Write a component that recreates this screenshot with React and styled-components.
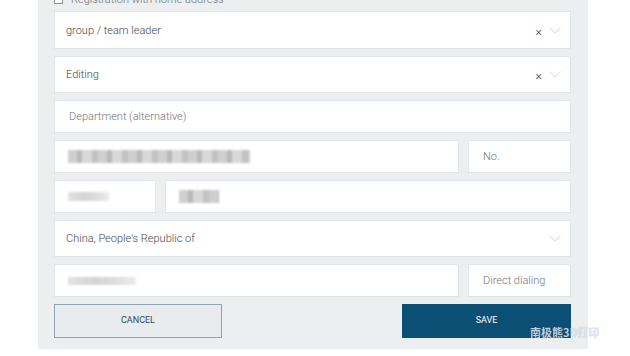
import styled, { createGlobalStyle } from "styled-components";

const GlobalStyle = createGlobalStyle`
  html, body {
    margin: 0;
    background: #ffffff;
    font-family: Roboto, "Liberation Sans", sans-serif;
    overflow: hidden;
  }
`;

export default function App() {
  return (
    <>
      <GlobalStyle />
      <Page>
        <Panel>
          <CheckRow>
            <Box />
            <CheckLabel>Registration with home address</CheckLabel>
          </CheckRow>

          <Field h={38}>
            <Value>group / team leader</Value>
            <Clear>×</Clear>
            <Chevron />
          </Field>

          <Field h={37}>
            <Value>Editing</Value>
            <Clear>×</Clear>
            <Chevron />
          </Field>

          <Field h={33}>
            <Placeholder indent={14}>Department (alternative)</Placeholder>
          </Field>

          <Row>
            <Field h={33} grow>
              <Blur w={182} h={13} />
            </Field>
            <Field h={33} w={103}>
              <Placeholder indent={14}>No.</Placeholder>
            </Field>
          </Row>

          <Row>
            <Field h={33} w={102}>
              <Blur w={41} h={9} light />
            </Field>
            <Field h={33} grow>
              <Blur w={40} h={13} />
            </Field>
          </Row>

          <Field h={37}>
            <Value>China, People's Republic of</Value>
            <Chevron />
          </Field>

          <Row>
            <Field h={33} grow>
              <Blur w={68} h={8} light />
            </Field>
            <Field h={33} w={103}>
              <Placeholder indent={14}>Direct dialing</Placeholder>
            </Field>
          </Row>

          <Buttons>
            <Button>CANCEL</Button>
            <Button primary>SAVE</Button>
          </Buttons>

          <Watermark>南极熊3D打印</Watermark>
        </Panel>
      </Page>
    </>
  );
}

function Chevron() {
  return (
    <ChevronSvg width="12" height="7" viewBox="0 0 12 7">
      <path d="M0.5 0.6 L6 6 L11.5 0.6" fill="none" stroke="#d5d9dd" strokeWidth="1" />
    </ChevronSvg>
  );
}

const Page = styled.div`
  width: 630px;
  height: 356px;
`;

const Panel = styled.div`
  position: relative;
  margin: -7px 0 0 38px;
  width: 550px;
  box-sizing: border-box;
  padding: 0 17px 17px 16px;
  background: #eceef0;
  display: flex;
  flex-direction: column;
  gap: 7px;
`;

const CheckRow = styled.div`
  height: 12px;
  display: flex;
  align-items: center;
  gap: 8px;
  margin-bottom: -1px;
`;

const Box = styled.div`
  width: 7px;
  height: 7px;
  border: 1px solid #8d9399;
  background: #fff;
`;

const CheckLabel = styled.span`
  font-size: 11px;
  font-weight: 300;
  color: #6b7075;
`;

const Row = styled.div`
  display: flex;
  gap: 9px;
`;

const Field = styled.div`
  height: ${(p) => p.h}px;
  ${(p) => (p.grow ? "flex: 1;" : "")}
  ${(p) => (p.w ? `width: ${p.w}px; flex: none;` : "")}
  box-sizing: border-box;
  background: #ffffff;
  border: 1px solid #e3e6e9;
  display: flex;
  align-items: center;
  padding: 0 9px 0 11px;
`;

const Value = styled.span`
  flex: 1;
  font-size: 11px;
  font-weight: 300;
  color: #3f4448;
`;

const Placeholder = styled.span`
  flex: 1;
  font-size: 11px;
  font-weight: 300;
  color: #6f757a;
  padding-left: ${(p) => p.indent - 11}px;
`;

const Clear = styled.span`
  font-size: 13px;
  font-weight: 300;
  color: #3f4448;
  margin-right: 7px;
  line-height: 1;
  position: relative;
  top: 1px;
`;

const ChevronSvg = styled.svg`
  flex: none;
  margin-left: auto;
`;

const Blur = styled.div`
  width: ${(p) => p.w}px;
  height: ${(p) => p.h}px;
  margin-left: 2px;
  background: ${(p) =>
    p.light
      ? "linear-gradient(90deg, #e2e2e2, #d4d4d4 40%, #dedede 70%, #ececec)"
      : "repeating-linear-gradient(90deg, #cfcfcf 0 9px, #b9b9b9 9px 14px, #d8d8d8 14px 24px, #c2c2c2 24px 30px)"};
  filter: blur(1.2px);
`;

const Buttons = styled.div`
  display: flex;
  justify-content: space-between;
`;

const Button = styled.button`
  width: ${(p) => (p.primary ? 169 : 168)}px;
  height: 34px;
  box-sizing: border-box;
  border: 1px solid ${(p) => (p.primary ? "#0b4f75" : "#8ea4b2")};
  background: ${(p) => (p.primary ? "#0b4f75" : "#e9ecee")};
  color: ${(p) => (p.primary ? "#ffffff" : "#2f4a5c")};
  font-family: Roboto, "Liberation Sans", sans-serif;
  font-size: 9px;
  padding: 0 0 2px;
`;

const Watermark = styled.div`
  position: absolute;
  left: 492px;
  top: 331px;
  font-family: "Noto Sans CJK SC", sans-serif;
  font-weight: 700;
  font-size: 11px;
  color: rgba(225, 235, 245, 0.85);
  white-space: nowrap;
  text-shadow: 0 0 1px rgba(0, 0, 0, 0.2);
`;
